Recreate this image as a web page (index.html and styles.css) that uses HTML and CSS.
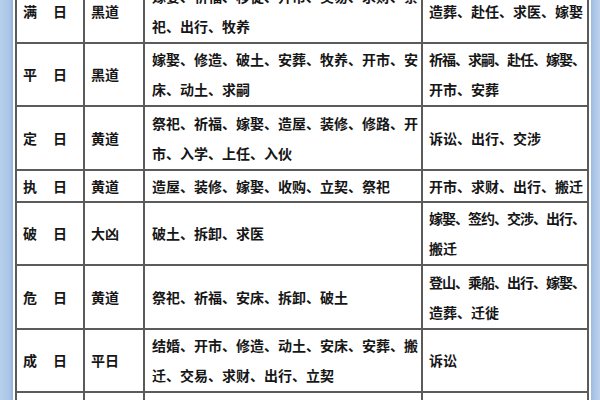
FILE: index.html
```html
<!DOCTYPE html>
<html lang="zh-CN">
<head>
<meta charset="utf-8">
<title>建除十二神</title>
<link rel="stylesheet" href="styles.css">
</head>
<body>
<div class="page">
  <div class="strip-left"></div>
  <div class="sheet">
    <table class="almanac">
      <colgroup>
        <col class="c-day"><col class="c-dao"><col class="c-yi"><col class="c-ji">
      </colgroup>
      <tbody>
        <tr class="two">
          <td class="day">满日</td><td class="dao">黑道</td>
          <td class="yi">嫁娶、祈福、移徙、开市、交易、求财、祭<br>祀、出行、牧养</td>
          <td class="ji">造葬、赴任、求医、嫁娶</td>
        </tr>
        <tr class="two">
          <td class="day">平日</td><td class="dao">黑道</td>
          <td class="yi">嫁娶、修造、破土、安葬、牧养、开市、安<br>床、动土、求嗣</td>
          <td class="ji"><span class="tight">祈福、求嗣、赴任、嫁娶、</span><br>开市、安葬</td>
        </tr>
        <tr class="two">
          <td class="day">定日</td><td class="dao">黄道</td>
          <td class="yi">祭祀、祈福、嫁娶、造屋、装修、修路、开<br>市、入学、上任、入伙</td>
          <td class="ji">诉讼、出行、交涉</td>
        </tr>
        <tr class="one">
          <td class="day">执日</td><td class="dao">黄道</td>
          <td class="yi">造屋、装修、嫁娶、收购、立契、祭祀</td>
          <td class="ji">开市、求财、出行、搬迁</td>
        </tr>
        <tr class="two">
          <td class="day">破日</td><td class="dao">大凶</td>
          <td class="yi">破土、拆卸、求医</td>
          <td class="ji"><span class="tight">嫁娶、签约、交涉、出行、</span><br>搬迁</td>
        </tr>
        <tr class="two">
          <td class="day">危日</td><td class="dao">黄道</td>
          <td class="yi">祭祀、祈福、安床、拆卸、破土</td>
          <td class="ji"><span class="tight">登山、乘船、出行、嫁娶、</span><br>造葬、迁徙</td>
        </tr>
        <tr class="two">
          <td class="day">成日</td><td class="dao">平日</td>
          <td class="yi">结婚、开市、修造、动土、安床、安葬、搬<br>迁、交易、求财、出行、立契</td>
          <td class="ji">诉讼</td>
        </tr>
        <tr class="two">
          <td class="day">收日</td><td class="dao">黑道</td>
          <td class="yi">祭祀、求财、签约、嫁娶、订盟、纳采、开<br>市、入学、安床</td>
          <td class="ji">开市、安床、安葬、入宅、<br>破土</td>
        </tr>
      </tbody>
    </table>
  </div>
  <div class="strip-right"></div>
</div>
</body>
</html>
```

FILE: styles.css
```css
html, body {
  margin: 0;
  padding: 0;
  background: #ffffff;
}

.page {
  display: flex;
  width: 600px;
  height: 400px;
  overflow: hidden;
  background: #ffffff;
}

.strip-left {
  flex: 0 0 13px;
  background: linear-gradient(to right, #b7cfeb 0%, #aac5e7 70%, #95b3da 100%);
}

.strip-right {
  flex: 0 0 9px;
  margin-left: auto;
  background: linear-gradient(to right, #9dbbe0 0%, #b3cbea 60%, #bcd2ec 100%);
}

.sheet {
  flex: 0 0 574px;
  padding-left: 2px;
  margin-top: -22px;
}

.almanac {
  table-layout: fixed;
  border-collapse: collapse;
  width: 573px;
  font-family: "Noto Sans CJK SC", "Noto Sans CJK JP", sans-serif;
  font-size: 14px;
  font-weight: 600;
  color: #161616;
  line-height: 30px;
}

.c-day { width: 68px; }
.c-dao { width: 60px; }
.c-yi  { width: 278px; }
.c-ji  { width: 166px; }

.almanac td {
  border: 2px solid #5b5b5b;
  padding: 0 0 0 6px;
  vertical-align: middle;
  white-space: nowrap;
  overflow: visible;
}

.almanac tr.two td { height: 63.5px; box-sizing: border-box; }
.almanac tr.one td { height: 32px; box-sizing: border-box; }

.almanac td.yi { padding-left: 7px; }
.almanac td.ji { padding-left: 6px; }

.day {
  letter-spacing: 16px;
}

.tight {
  letter-spacing: -1px;
}
```
